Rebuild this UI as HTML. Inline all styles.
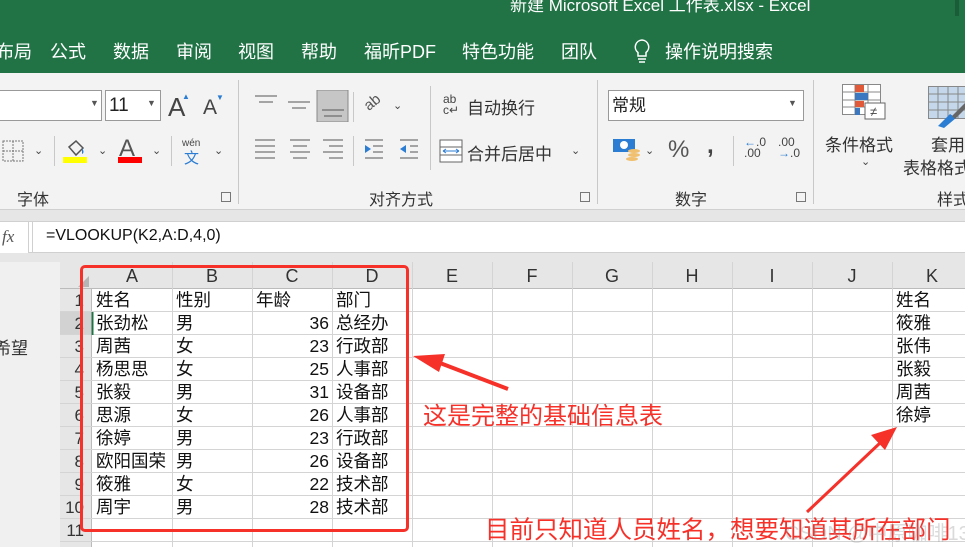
<!DOCTYPE html>
<html><head><meta charset="utf-8"><style>
*{margin:0;padding:0;box-sizing:border-box}
body{width:965px;height:547px;overflow:hidden;position:relative;background:#fff;font-family:"Liberation Sans","Noto Sans CJK SC",sans-serif;color:#222}
.a{position:absolute;white-space:nowrap}
.tab{color:#fff;font-size:18px;top:38px}
.grp{font-size:16px;color:#333;top:186px}
.sep{position:absolute;width:1px;background:#c8c8c8}
.cell{position:absolute;font-size:17.5px;color:#111;height:23px;line-height:23px}
.ch{position:absolute;top:262px;height:27px;line-height:28px;font-size:18px;text-align:center;color:#333}
.rh{position:absolute;left:60px;width:32px;text-align:right;padding-right:8px;font-size:17px;color:#333;height:23px;line-height:23px}
</style></head><body>
<div class="a" style="left:0;top:0;width:965px;height:73px;background:#217346"></div>
<div class="a" style="left:510px;top:-9px;color:#fff;font-size:17px">新建 Microsoft Excel 工作表.xlsx  -  Excel</div>
<div class="a" style="left:955px;top:0;width:4px;height:16px;background:#1a5c37"></div>
<div class="a tab" style="left:-4px">布局</div>
<div class="a tab" style="left:50px">公式</div>
<div class="a tab" style="left:113px">数据</div>
<div class="a tab" style="left:176px">审阅</div>
<div class="a tab" style="left:238px">视图</div>
<div class="a tab" style="left:301px">帮助</div>
<div class="a tab" style="left:364px">福昕PDF</div>
<div class="a tab" style="left:462px">特色功能</div>
<div class="a tab" style="left:561px">团队</div>
<svg class="a" style="left:631px;top:38px" width="22" height="26" viewBox="0 0 22 26"><path d="M11 2a7 7 0 0 0-4 12.5V18h8v-3.5A7 7 0 0 0 11 2z" fill="none" stroke="#fff" stroke-width="1.5"/><path d="M7 21h8M8 24h6" stroke="#fff" stroke-width="1.5"/></svg>
<div class="a tab" style="left:665px">操作说明搜索</div>
<div class="a" style="left:0;top:73px;width:965px;height:137px;background:#f3f3f3"></div>
<div class="a" style="left:0;top:209px;width:965px;height:13px;background:#e6e6e6;border-top:1px solid #d0d0d0;border-bottom:1px solid #d0d0d0"></div>
<div class="sep" style="left:238px;top:80px;height:124px"></div>
<div class="sep" style="left:597px;top:80px;height:124px"></div>
<div class="sep" style="left:813px;top:80px;height:124px"></div>
<div class="a" style="left:-2px;top:90px;width:104px;height:31px;background:#fff;border:1px solid #999"></div>
<div class="a" style="left:90px;top:98px;font-size:9px;color:#555">▼</div>
<div class="a" style="left:105px;top:90px;width:56px;height:31px;background:#fff;border:1px solid #999;font-size:19px;padding-left:3px;line-height:29px">11</div>
<div class="a" style="left:147px;top:98px;font-size:9px;color:#555">▼</div>
<div class="a" style="left:168px;top:92px;font-size:26px;color:#444">A</div>
<div class="a" style="left:182px;top:92px;font-size:8px;color:#2b7cd3">▲</div>
<div class="a" style="left:203px;top:96px;font-size:21px;color:#444">A</div>
<div class="a" style="left:216px;top:93px;font-size:8px;color:#2b7cd3">▼</div>
<svg class="a" style="left:2px;top:140px" width="22" height="22"><rect x="1" y="1" width="20" height="20" fill="none" stroke="#777" stroke-dasharray="2 1"/><path d="M11 1v20M1 11h20" stroke="#777" stroke-dasharray="2 1"/></svg>
<div class="a" style="left:34px;top:144px;font-size:11px;color:#444">⌄</div>
<div class="sep" style="left:54px;top:136px;height:30px"></div>
<svg class="a" style="left:63px;top:137px" width="26" height="26"><path d="M6 10l7-6 7 7-7 7z" fill="none" stroke="#555" stroke-width="1.5"/><path d="M19 11c2 3 2 5 0 6" fill="#2b7cd3"/><rect x="0" y="20" width="24" height="6" fill="#ffff00"/></svg>
<div class="a" style="left:98px;top:144px;font-size:11px;color:#444">⌄</div>
<div class="a" style="left:119px;top:135px;font-size:24px;color:#555">A</div>
<div class="a" style="left:118px;top:157px;width:24px;height:6px;background:#f00"></div>
<div class="a" style="left:152px;top:144px;font-size:11px;color:#444">⌄</div>
<div class="sep" style="left:171px;top:136px;height:30px"></div>
<div class="a" style="left:182px;top:138px;font-size:10px;color:#444">wén</div>
<div class="a" style="left:184px;top:147px;font-size:15px;color:#2b7cd3">文</div>
<div class="a" style="left:214px;top:144px;font-size:11px;color:#444">⌄</div>
<div class="a grp" style="left:17px">字体</div>
<div class="a" style="left:221px;top:192px;width:10px;height:10px;border:1px solid #777"></div>
<svg class="a" style="left:250px;top:90px" width="100" height="32"><path d="M5 6h22M9 12h14" stroke="#555"/><path d="M38 12h22M42 18h14" stroke="#555"/><rect x="67" y="0" width="31" height="32" fill="#c6c6c6" stroke="#888"/><path d="M72 20h22M74 26h18" stroke="#555"/></svg>
<div class="a" style="left:364px;top:94px;font-size:15px;color:#555;transform:rotate(-40deg)">ab</div>
<div class="a" style="left:393px;top:99px;font-size:11px;color:#444">⌄</div>
<svg class="a" style="left:252px;top:138px" width="170" height="24"><g stroke="#555"><path d="M3 2h20M3 8h20M3 14h20M3 20h20"/><path d="M38 2h20M41 8h14M38 14h20M41 20h14"/><path d="M71 2h20M77 8h14M71 14h20M77 20h14"/><path d="M113 2h18M121 8h10M121 14h10M113 20h18"/><path d="M148 2h18M158 8h8M158 14h8M148 20h18"/></g><path d="M119 11l-6-4v8z" fill="#2b7cd3"/><path d="M148 11l6-4v8z" fill="#2b7cd3"/></svg>
<div class="sep" style="left:353px;top:92px;height:30px"></div>
<div class="sep" style="left:353px;top:136px;height:30px"></div>
<div class="sep" style="left:430px;top:86px;height:84px"></div>
<div class="a" style="left:443px;top:94px;font-size:12px;line-height:11px;color:#444">ab<br>c↵</div>
<div class="a" style="left:467px;top:94px;font-size:17px;color:#333">自动换行</div>
<svg class="a" style="left:439px;top:139px" width="24" height="24"><rect x="1" y="1" width="22" height="22" fill="#fff" stroke="#666"/><path d="M1 8h22M1 16h22" stroke="#666"/><rect x="2" y="9" width="20" height="6" fill="#fff"/><path d="M4 12h16M4 12l3-2M4 12l3 2M20 12l-3-2M20 12l-3 2" stroke="#2b7cd3"/></svg>
<div class="a" style="left:467px;top:140px;font-size:17px;color:#333">合并后居中</div>
<div class="a" style="left:571px;top:144px;font-size:11px;color:#444">⌄</div>
<div class="a grp" style="left:369px">对齐方式</div>
<div class="a" style="left:580px;top:192px;width:10px;height:10px;border:1px solid #777"></div>
<div class="a" style="left:608px;top:90px;width:196px;height:31px;background:#fff;border:1px solid #999;font-size:17px;padding-left:3px;line-height:29px">常规</div>
<div class="a" style="left:788px;top:98px;font-size:9px;color:#555">▼</div>
<svg class="a" style="left:612px;top:137px" width="30" height="26"><rect x="1" y="2" width="22" height="13" fill="#2b7cd3"/><circle cx="12" cy="8" r="4" fill="#fff"/><ellipse cx="22" cy="14" rx="6" ry="2" fill="#f0c070"/><ellipse cx="22" cy="18" rx="6" ry="2" fill="#f0c070"/><ellipse cx="20" cy="22" rx="6" ry="2" fill="#f0c070"/></svg>
<div class="a" style="left:645px;top:144px;font-size:11px;color:#444">⌄</div>
<div class="a" style="left:668px;top:136px;font-size:24px;color:#555">%</div>
<div class="a" style="left:707px;top:132px;font-size:24px;color:#444;font-weight:bold">,</div>
<div class="sep" style="left:733px;top:136px;height:30px"></div>
<div class="a" style="left:744px;top:137px;font-size:12px;line-height:11px;color:#444"><span style="color:#2b7cd3">←</span>.0<br>.00</div>
<div class="a" style="left:778px;top:137px;font-size:12px;line-height:11px;color:#444">.00<br><span style="color:#2b7cd3">→</span>.0</div>
<div class="a grp" style="left:675px">数字</div>
<div class="a" style="left:796px;top:192px;width:10px;height:10px;border:1px solid #777"></div>
<svg class="a" style="left:842px;top:84px" width="46" height="36"><g fill="none" stroke="#888"><rect x="0.5" y="0.5" width="38" height="30" fill="#fff"/><path d="M0 8h38M0 16h38M0 23h38M13 0v31M26 0v31"/></g><rect x="13" y="1" width="9" height="7" fill="#e05a3a"/><rect x="13" y="9" width="13" height="7" fill="#3c78c0"/><rect x="13" y="17" width="9" height="6" fill="#e05a3a"/><rect x="13" y="24" width="5" height="7" fill="#3c78c0"/><rect x="23" y="19" width="20" height="16" fill="#fff" stroke="#666"/><text x="28" y="32" font-size="13" fill="#444">≠</text></svg>
<div class="a" style="left:825px;top:131px;font-size:17px;color:#333">条件格式</div>
<div class="a" style="left:861px;top:155px;font-size:11px;color:#444">⌄</div>
<svg class="a" style="left:928px;top:86px" width="40" height="44"><rect x="0.5" y="0.5" width="38" height="32" fill="#c5d7ea" stroke="#888"/><path d="M0 8h38M0 16h38M0 24h38M10 0v33M20 0v33M30 0v33" stroke="#888" fill="none"/><path d="M10 40l12-12 6 4-12 10z" fill="#2b7cd3"/><path d="M24 30l14-14 3 3-14 14z" fill="#666"/></svg>
<div class="a" style="left:931px;top:131px;font-size:17px;color:#333">套用</div>
<div class="a" style="left:903px;top:154px;font-size:17px;color:#333">表格格式</div>
<div class="a grp" style="left:937px">样式</div>
<div class="a" style="left:0;top:222px;width:965px;height:31px;background:#fff;border-bottom:1px solid #d0d0d0"></div>
<div class="a" style="left:0;top:222px;width:29px;height:31px;background:#fff;border-right:1px solid #d0d0d0;font-family:'Liberation Serif',serif;font-style:italic;font-size:17px;color:#555;line-height:30px;padding-left:2px">fx</div>
<div class="a" style="left:32px;top:222px;width:1px;height:31px;background:#d0d0d0"></div>
<div class="a" style="left:46px;top:227px;font-size:16px;color:#111">=VLOOKUP(K2,A:D,4,0)</div>
<div class="a" style="left:0;top:253px;width:965px;height:9px;background:#e6e6e6"></div>
<div class="a" style="left:0;top:262px;width:60px;height:285px;background:#f0f0f0"></div>
<div class="a" style="left:-6px;top:334px;font-size:17px;color:#333">希望</div>
<div class="a" style="left:60px;top:262px;width:905px;height:27px;background:#e6e6e6;border-bottom:1px solid #bbb"></div>
<div class="a" style="left:60px;top:289px;width:32px;height:258px;background:#e6e6e6;border-right:1px solid #bbb"></div>
<div class="a" style="left:60px;top:312px;width:32px;height:23px;background:#d2d2d2"></div>
<div class="a" style="left:78px;top:276px;width:0;height:0;border-left:11px solid transparent;border-bottom:11px solid #b5b5b5"></div>
<svg class="a" style="left:0;top:0" width="965" height="547">
<g stroke="#d4d4d4" stroke-width="1">
<path d="M172.5 262v285M252.5 262v285M332.5 262v285M412.5 262v285M492.5 262v285M572.5 262v285M652.5 262v285M732.5 262v285M812.5 262v285M892.5 262v285"/>
<path d="M92 311.5h873M92 334.5h873M92 357.5h873M92 380.5h873M92 403.5h873M92 426.5h873M92 449.5h873M92 472.5h873M92 495.5h873M92 518.5h873M92 541.5h873"/>
<path d="M60 311.5h32M60 334.5h32M60 357.5h32M60 380.5h32M60 403.5h32M60 426.5h32M60 449.5h32M60 472.5h32M60 495.5h32M60 518.5h32M60 541.5h32"/>
</g>
<path d="M92.5 312v23" stroke="#217346" stroke-width="2"/>
</svg>
<div class="ch" style="left:92px;width:80px">A</div><div class="ch" style="left:172px;width:80px">B</div><div class="ch" style="left:252px;width:80px">C</div><div class="ch" style="left:332px;width:80px">D</div><div class="ch" style="left:412px;width:80px">E</div><div class="ch" style="left:492px;width:80px">F</div><div class="ch" style="left:572px;width:80px">G</div><div class="ch" style="left:652px;width:80px">H</div><div class="ch" style="left:732px;width:80px">I</div><div class="ch" style="left:812px;width:80px">J</div><div class="ch" style="left:892px;width:80px">K</div>
<div class="rh" style="top:289px">1</div><div class="rh" style="top:312px">2</div><div class="rh" style="top:335px">3</div><div class="rh" style="top:358px">4</div><div class="rh" style="top:381px">5</div><div class="rh" style="top:404px">6</div><div class="rh" style="top:427px">7</div><div class="rh" style="top:450px">8</div><div class="rh" style="top:473px">9</div><div class="rh" style="top:496px">10</div><div class="rh" style="top:519px">11</div>
<div class="cell" style="left:96px;top:289px">姓名</div><div class="cell" style="left:176px;top:289px">性别</div><div class="cell" style="left:256px;top:289px">年龄</div><div class="cell" style="left:336px;top:289px">部门</div>
<div class="cell" style="left:96px;top:312px">张劲松</div><div class="cell" style="left:176px;top:312px">男</div><div class="cell" style="left:252px;width:77px;text-align:right;top:312px">36</div><div class="cell" style="left:336px;top:312px">总经办</div>
<div class="cell" style="left:96px;top:335px">周茜</div><div class="cell" style="left:176px;top:335px">女</div><div class="cell" style="left:252px;width:77px;text-align:right;top:335px">23</div><div class="cell" style="left:336px;top:335px">行政部</div>
<div class="cell" style="left:96px;top:358px">杨思思</div><div class="cell" style="left:176px;top:358px">女</div><div class="cell" style="left:252px;width:77px;text-align:right;top:358px">25</div><div class="cell" style="left:336px;top:358px">人事部</div>
<div class="cell" style="left:96px;top:381px">张毅</div><div class="cell" style="left:176px;top:381px">男</div><div class="cell" style="left:252px;width:77px;text-align:right;top:381px">31</div><div class="cell" style="left:336px;top:381px">设备部</div>
<div class="cell" style="left:96px;top:404px">思源</div><div class="cell" style="left:176px;top:404px">女</div><div class="cell" style="left:252px;width:77px;text-align:right;top:404px">26</div><div class="cell" style="left:336px;top:404px">人事部</div>
<div class="cell" style="left:96px;top:427px">徐婷</div><div class="cell" style="left:176px;top:427px">男</div><div class="cell" style="left:252px;width:77px;text-align:right;top:427px">23</div><div class="cell" style="left:336px;top:427px">行政部</div>
<div class="cell" style="left:96px;top:450px">欧阳国荣</div><div class="cell" style="left:176px;top:450px">男</div><div class="cell" style="left:252px;width:77px;text-align:right;top:450px">26</div><div class="cell" style="left:336px;top:450px">设备部</div>
<div class="cell" style="left:96px;top:473px">筱雅</div><div class="cell" style="left:176px;top:473px">女</div><div class="cell" style="left:252px;width:77px;text-align:right;top:473px">22</div><div class="cell" style="left:336px;top:473px">技术部</div>
<div class="cell" style="left:96px;top:496px">周宇</div><div class="cell" style="left:176px;top:496px">男</div><div class="cell" style="left:252px;width:77px;text-align:right;top:496px">28</div><div class="cell" style="left:336px;top:496px">技术部</div>
<div class="cell" style="left:896px;top:289px">姓名</div><div class="cell" style="left:896px;top:312px">筱雅</div><div class="cell" style="left:896px;top:335px">张伟</div><div class="cell" style="left:896px;top:358px">张毅</div><div class="cell" style="left:896px;top:381px">周茜</div><div class="cell" style="left:896px;top:404px">徐婷</div>
<div class="a" style="left:80px;top:265px;width:329px;height:267px;border:3px solid #f5312a;border-radius:5px"></div>
<svg class="a" style="left:0;top:0" width="965" height="547">
<path d="M508 389L440 363" stroke="#f5312a" stroke-width="4"/><path d="M413 356l32-2-6 18z" fill="#f5312a"/>
<path d="M807 512L880 443" stroke="#f5312a" stroke-width="3"/><path d="M897 427l-26 8 14 15z" fill="#f5312a"/>
</svg>
<div class="a" style="left:423px;top:396px;font-size:24px;color:#f5312a">这是完整的基础信息表</div>
<div class="a" style="left:485px;top:511px;font-size:24.5px;color:#f5312a">目前只知道人员姓名，想要知道其所在部门</div>
<div class="a" style="left:785px;top:517px;font-size:20px;color:rgba(150,150,150,0.35)">CSDN @中原咖啡13</div>
</body></html>
